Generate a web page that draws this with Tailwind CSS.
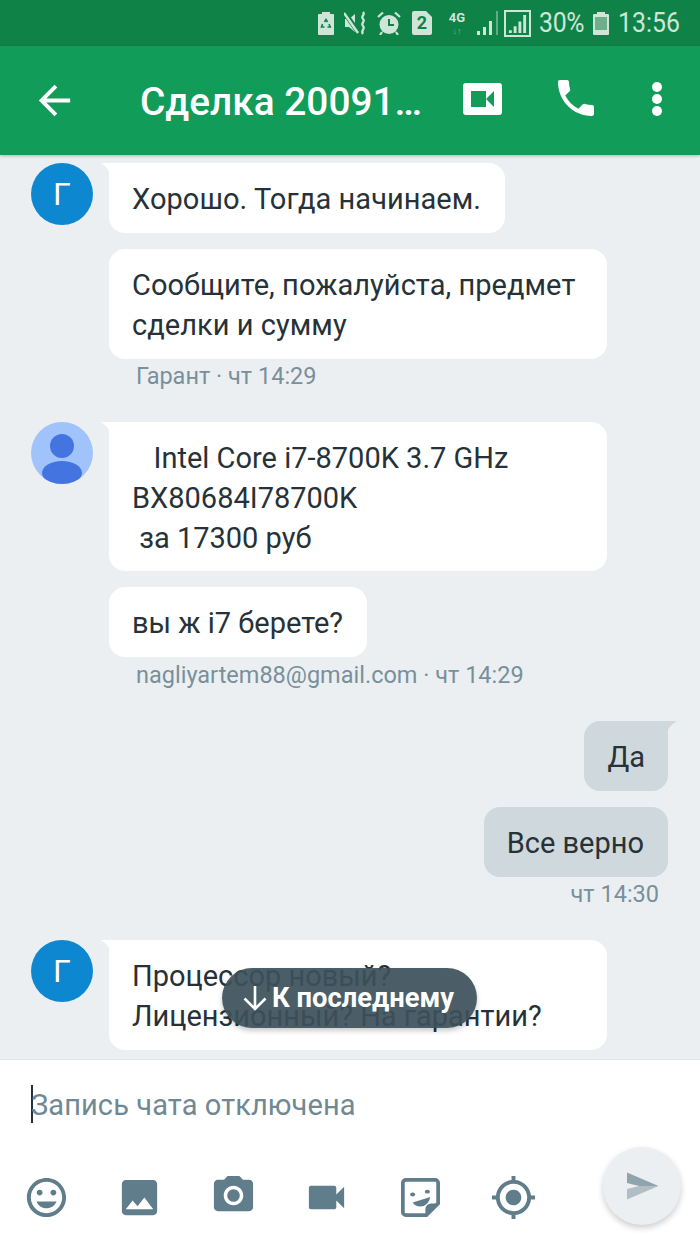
<!DOCTYPE html>
<html lang="ru">
<head>
<meta charset="utf-8">
<script src="https://cdn.jsdelivr.net/npm/@tailwindcss/browser@4"></script>
</head>
<body class="m-0">
<div class="relative w-[700px] h-[1244px] overflow-hidden flex flex-col bg-white font-['Roboto',sans-serif] text-[#263238]">
  <!-- status bar -->
  <div class="h-[46px] shrink-0 bg-[#0f8248] text-[#cfe5d8] relative">
    <div class="flex items-center h-full pl-[318px]">
      <svg class="w-[16px] h-[24px]" viewBox="0 0 16 24"><path fill="#cfe5d8" d="M4 1h8v2h3a1 1 0 0 1 1 1v19a1 1 0 0 1-1 1H1a1 1 0 0 1-1-1V4a1 1 0 0 1 1-1h3z"/><path fill="none" stroke="#0f8248" stroke-width="1.6" d="M6.500 11l1.500-2.500 1.500 2.500M11 13l1.300 3H9.500M4.500 13l-1 3h3"/></svg>
      <svg class="w-[24px] h-[24px] ml-[10px]" viewBox="0 0 24 24"><path fill="#cfe5d8" d="M1 8h4l6-5v18l-6-5H1z"/><path stroke="#0f8248" stroke-width="5" d="M0 1l15 21"/><path stroke="#cfe5d8" stroke-width="2.400" d="M0 2l14 20"/><path fill="none" stroke="#cfe5d8" stroke-width="2.200" d="M19 1c3 3-3 4 0 7s-3 4 0 7-3 4 0 8"/></svg>
      <svg class="w-[24px] h-[24px] ml-[9px]" viewBox="0 0 24 24"><circle cx="12" cy="13.500" r="9.500" fill="#cfe5d8"/><path fill="none" stroke="#0f8248" stroke-width="2" d="M12 8v6h5"/><path fill="none" stroke="#cfe5d8" stroke-width="2.200" d="M1 6l5-4.500M23 6l-5-4.500M5 21l-2 3M19 21l2 3"/></svg>
      <div class="ml-[11px] w-[20px] h-[24px] bg-[#cfe5d8] rounded-[2px] text-[#0f8248] text-[18px] leading-[24px] font-bold text-center [clip-path:polygon(0_0,70%_0,100%_25%,100%_100%,0_100%)]">2</div>
      <div class="ml-[14px] w-[22px] flex flex-col items-center">
        <span class="text-[13px] leading-[13px] font-bold">4G</span>
        <span class="text-[9px] leading-[9px] text-[#6fb58e] font-bold mt-[3px]">↓↑</span>
      </div>
      <svg class="w-[24px] h-[24px] ml-[8px]" viewBox="0 0 24 24"><path fill="#cfe5d8" d="M1 20h3v4H1zM7 16h3v8H7zM13 10h3v14h-3z"/><path fill="#5fae83" d="M20 0h2v24h-2z"/></svg>
      <div class="ml-[4px] w-[27px] h-[27px] border-2 border-[#cfe5d8] flex items-center justify-center">
        <svg class="w-[21px] h-[21px]" viewBox="0 0 22 22"><path fill="#cfe5d8" d="M2 18h3v3H2zM7 14h3v7H7zM12 9h3v12h-3zM17 2h3v19h-3z"/></svg>
      </div>
      <span class="ml-[8px] text-[27px] leading-[46px] w-[45px] origin-left scale-x-[0.92] tracking-[-0.3px] whitespace-nowrap">30%</span>
      <svg class="w-[16px] h-[24px] ml-[9px]" viewBox="0 0 16 24"><path fill="#cfe5d8" d="M4 1h8v2h3a1 1 0 0 1 1 1v19a1 1 0 0 1-1 1H1a1 1 0 0 1-1-1V4a1 1 0 0 1 1-1h3z"/><path fill="#6fae8d" d="M2 6h12v13H2z"/></svg>
      <span class="ml-[9px] text-[27px] leading-[46px] origin-left scale-x-[0.92]">13:56</span>
    </div>
  </div>
  <!-- app bar -->
  <div class="relative z-10 h-[109px] shrink-0 bg-[#129c59] flex items-center pl-[31px] text-white shadow-[0_1px_3px_rgba(0,0,0,0.25)]">
    <svg class="w-[47px] h-[47px]" viewBox="0 0 24 24"><path fill="#fff" d="M20 11H7.830l5.590-5.590L12 4l-8 8 8 8 1.410-1.410L7.830 13H20v-2z"/></svg>
    <div class="ml-[62px] w-[323px] text-[38.8px] leading-[44px] font-medium whitespace-nowrap mt-[2px]">Сделка 20091…</div>
    <svg class="w-[39px] h-[32px] -mt-[4px]" viewBox="0 0 39 32"><rect width="39" height="32" rx="3" fill="#fff"/><path fill="#129c59" d="M8 8h15v16H8zM23 16l8-8v16z"/></svg>
    <svg class="w-[48px] h-[48px] ml-[50px] -mt-[5px]" viewBox="0 0 24 24"><path fill="#fff" d="M6.620 10.790c1.440 2.830 3.760 5.140 6.590 6.590l2.200-2.200c.27-.27.67-.36 1.020-.24 1.120.37 2.330.57 3.570.57.55 0 1 .45 1 1V20c0 .55-.45 1-1 1-9.390 0-17-7.610-17-17 0-.55.45-1 1-1h3.500c.55 0 1 .45 1 1 0 1.250.2 2.450.57 3.570.11.35.03.74-.25 1.020l-2.200 2.200z"/></svg>
    <div class="ml-[52px] flex flex-col gap-[2px] -mt-[4px]">
      <span class="w-[10px] h-[10px] rounded-full bg-white"></span>
      <span class="w-[10px] h-[10px] rounded-full bg-white"></span>
      <span class="w-[10px] h-[10px] rounded-full bg-white"></span>
    </div>
  </div>
  <!-- chat -->
  <div class="relative h-[904px] shrink-0 bg-[#eceff1] overflow-hidden pt-[8px] text-[29px] leading-[40px]">
    <!-- group 1 -->
    <div class="flex pl-[31px]">
      <div class="w-[62px] h-[62px] shrink-0 rounded-full bg-[#0d87d0] text-white text-[32px] flex items-center justify-center">Г</div>
      <div class="ml-[16px] flex flex-col items-start gap-[16px]">
        <div class="relative bg-white rounded-[16px] rounded-tl-none pl-[23px] pr-[24px] pt-[16px] pb-[14px] max-w-[498px] tracking-[0.05px]">
          <svg class="absolute -left-[8px] top-0 w-[9px] h-[14px]" viewBox="0 0 9 14"><path fill="#fff" d="M0 0h9v14C9 7 5 3 0 0z"/></svg>
          Хорошо. Тогда начинаем.</div>
        <div class="bg-white rounded-[16px] pl-[23px] pr-[25px] pt-[16px] pb-[14px] max-w-[498px] tracking-[0.05px]">Сообщите, пожалуйста, предмет сделки и сумму</div>
        <div class="-mt-[15px] h-[32px] ml-[27px] text-[23.5px] leading-[32px] text-[#78909c]">Гарант · чт 14:29</div>
      </div>
    </div>
    <!-- group 2 -->
    <div class="flex pl-[31px] mt-[30px]">
      <div class="w-[62px] h-[62px] shrink-0 rounded-full bg-[#a0c3fb] relative overflow-hidden">
        <svg class="w-[62px] h-[62px]" viewBox="0 0 62 62"><circle cx="31" cy="24" r="12" fill="#4374e0"/><ellipse cx="31" cy="51" rx="20" ry="12" fill="#4374e0"/></svg>
      </div>
      <div class="ml-[16px] flex flex-col items-start gap-[16px]">
        <div class="relative bg-white rounded-[16px] rounded-tl-none pl-[23px] pr-[25px] pt-[16px] pb-[13px] w-[498px]">
          <svg class="absolute -left-[8px] top-0 w-[9px] h-[14px]" viewBox="0 0 9 14"><path fill="#fff" d="M0 0h9v14C9 7 5 3 0 0z"/></svg>
          &nbsp;&nbsp;&nbsp;Intel Core i7-8700K 3.7 GHz<br>BX80684I78700K<br>&nbsp;за 17300 руб</div>
        <div class="bg-white rounded-[16px] pl-[23px] pr-[24px] pt-[16px] pb-[14px]">вы ж i7 берете?</div>
        <div class="-mt-[15px] h-[32px] ml-[27px] text-[23.5px] leading-[32px] text-[#78909c] translate-y-[1px]">nagliyartem88@gmail.com · чт 14:29</div>
      </div>
    </div>
    <!-- outgoing -->
    <div class="flex flex-col items-end pr-[32px] mt-[31px] gap-[16px]">
      <div class="relative bg-[#cfd8dc] rounded-[16px] rounded-tr-none px-[23px] pt-[16px] pb-[14px]">
        <svg class="absolute -right-[9px] top-0 w-[10px] h-[14px]" viewBox="0 0 10 14"><path fill="#cfd8dc" d="M10 0H0v14C0 7 5 3 10 0z"/></svg>
        Да</div>
      <div class="bg-[#cfd8dc] rounded-[16px] pl-[23px] pr-[24px] pt-[16px] pb-[14px]">Все верно</div>
      <div class="-mt-[15px] h-[32px] mr-[9px] text-[23.5px] leading-[32px] text-[#78909c]">чт 14:30</div>
    </div>
    <!-- group 3 -->
    <div class="flex pl-[31px] mt-[30px]">
      <div class="w-[62px] h-[62px] shrink-0 rounded-full bg-[#0d87d0] text-white text-[32px] flex items-center justify-center">Г</div>
      <div class="relative ml-[16px] bg-white rounded-[16px] rounded-tl-none pl-[23px] pr-[25px] pt-[16px] pb-[14px] w-[498px]">
        <svg class="absolute -left-[8px] top-0 w-[9px] h-[14px]" viewBox="0 0 9 14"><path fill="#fff" d="M0 0h9v14C9 7 5 3 0 0z"/></svg>
        Процессор новый? Лицензионный? На гарантии?</div>
    </div>
    <!-- floating pill -->
    <div class="absolute left-[222px] top-[813px] w-[255px] h-[60px] rounded-[30px] bg-[#3c505a]/92 shadow-[0_3px_5px_rgba(0,0,0,0.2)] flex items-center pl-[20px] text-white text-[27.4px] font-bold whitespace-nowrap">
      <svg class="w-[26px] h-[26px] mr-[4px] shrink-0" viewBox="0 0 26 26"><path fill="none" stroke="#fff" stroke-width="2.600" d="M13 1v23M2.500 13.500L13 24l10.500-10.500"/></svg>
      К последнему
    </div>
  </div>
  <!-- composer -->
  <div class="flex-1 border-t border-[#dfe2e4] bg-white relative">
    <div class="flex items-center h-[87px] pl-[31px]">
      <span class="w-[2px] h-[38px] bg-[#263238] -mr-[2px]"></span>
      <span class="text-[29px] leading-[40px] text-[#6f8894] mt-[2px] tracking-[0.1px]">Запись чата отключена</span>
    </div>
    <div class="flex items-start pl-[23px] gap-[46.4px]">
      <svg class="w-[47px] h-[47px] mt-[27px] shrink-0" viewBox="0 0 24 24"><path fill="#607d8b" d="M11.990 2C6.470 2 2 6.480 2 12s4.470 10 9.990 10C17.520 22 22 17.520 22 12S17.520 2 11.990 2zM12 20c-4.420 0-8-3.580-8-8s3.580-8 8-8 8 3.580 8 8-3.580 8-8 8zm3.500-9c.83 0 1.500-.67 1.500-1.500S16.330 8 15.500 8 14 8.670 14 9.500s.67 1.500 1.500 1.500zm-7 0c.83 0 1.500-.67 1.500-1.500S9.330 8 8.500 8 7 8.670 7 9.500 7.670 11 8.500 11zm3.500 6.500c2.330 0 4.310-1.460 5.110-3.500H6.890c.8 2.040 2.780 3.500 5.110 3.500z"/></svg>
      <svg class="w-[47px] h-[47px] mt-[27px] shrink-0" viewBox="0 0 24 24"><path fill="#607d8b" d="M21 19V5c0-1.100-.9-2-2-2H5c-1.100 0-2 .9-2 2v14c0 1.100.9 2 2 2h14c1.100 0 2-.9 2-2zM8.500 13.500l2.500 3.010L14.500 12l4.500 6H5l3.500-4.500z"/></svg>
      <svg class="w-[47px] h-[47px] mt-[25px] shrink-0" viewBox="0 0 24 24"><circle cx="12" cy="12" r="3.200" fill="#607d8b"/><path fill="#607d8b" d="M9 2L7.170 4H4c-1.100 0-2 .9-2 2v12c0 1.100.9 2 2 2h16c1.100 0 2-.9 2-2V6c0-1.100-.9-2-2-2h-3.170L15 2H9zm3 15c-2.760 0-5-2.240-5-5s2.240-5 5-5 5 2.240 5 5-2.240 5-5 5z"/></svg>
      <svg class="w-[47px] h-[47px] mt-[27px] shrink-0" viewBox="0 0 24 24"><path fill="#607d8b" d="M17 10.500V7c0-.55-.45-1-1-1H4c-.55 0-1 .45-1 1v10c0 .55.45 1 1 1h12c.55 0 1-.45 1-1v-3.500l4 4v-11l-4 4z"/></svg>
      <svg class="w-[47px] h-[47px] mt-[27px] shrink-0" viewBox="0 0 24 24"><path fill="none" stroke="#607d8b" stroke-width="1.900" d="M4.500 3h15A1.500 1.500 0 0 1 21 4.500V15l-6 6H4.500A1.500 1.500 0 0 1 3 19.500v-15A1.500 1.500 0 0 1 4.500 3z"/><path fill="#607d8b" d="M14.500 21.500V18a3 3 0 0 1 3-3h4z"/><ellipse cx="8" cy="10.500" rx="1.300" ry="1" fill="#607d8b"/><ellipse cx="15.500" cy="9" rx="1.300" ry="1" fill="#607d8b"/><path fill="#607d8b" d="M8 14.500l9-2.800c-.5 2.500-2 4.300-4.200 4.800-2 .4-3.800-.4-4.800-2z"/></svg>
      <svg class="w-[47px] h-[47px] mt-[27px] shrink-0" viewBox="0 0 24 24"><path fill="#607d8b" d="M12 8c-2.210 0-4 1.790-4 4s1.790 4 4 4 4-1.790 4-4-1.790-4-4-4zm8.940 3c-.46-4.170-3.770-7.480-7.940-7.940V1h-2v2.060C6.830 3.520 3.520 6.830 3.060 11H1v2h2.060c.46 4.170 3.770 7.480 7.940 7.940V23h2v-2.060c4.170-.46 7.480-3.770 7.940-7.940H23v-2h-2.060zM12 19c-3.870 0-7-3.130-7-7s3.130-7 7-7 7 3.130 7 7-3.130 7-7 7z"/></svg>
      <div class="ml-auto mr-[19px] w-[78px] h-[78px] shrink-0 rounded-full bg-[#eceff1] shadow-[0_3px_6px_rgba(0,0,0,0.2)] flex items-center justify-center">
        <svg class="w-[36px] h-[36px]" viewBox="0 0 24 24"><path fill="#90a4ae" d="M2.010 3L23 12H10L2 10z"/><path fill="#b0bec5" d="M2.010 21L23 12H10L2 14z"/></svg>
      </div>
    </div>
  </div>
</div>
</body>
</html>
